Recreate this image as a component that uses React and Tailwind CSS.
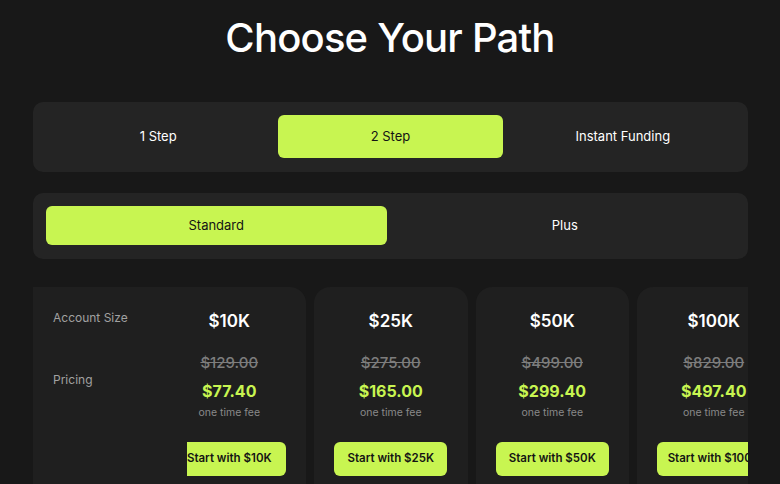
import { useState } from 'react';

const plans = [
  { size: '$10K', was: '$129.00', now: '$77.40' },
  { size: '$25K', was: '$275.00', now: '$165.00' },
  { size: '$50K', was: '$499.00', now: '$299.40' },
  { size: '$100K', was: '$829.00', now: '$497.40' },
];

function Segmented({ options, value, onChange, cols, tall }) {
  return (
    <div className={`grid ${cols} gap-2 rounded-[10px] bg-[#242424] px-[13px] pt-[13px] pb-[14px]`}>
      {options.map((o) => (
        <button
          key={o}
          onClick={() => onChange(o)}
          className={`${tall ? 'h-[43px]' : 'h-[39px]'} rounded-[6px] text-[13px] ${
            value === o ? 'bg-[#c8f551] text-[#141414]' : 'text-white'
          }`}
        >
          {o}
        </button>
      ))}
    </div>
  );
}

function PlanCard({ plan }) {
  return (
    <div className="flex w-[153.5px] shrink-0 flex-col items-center rounded-t-[16px] bg-[#1f1f1f] pt-[22px] pb-6">
      <p className="h-6 text-[17px] font-semibold leading-6 text-white">{plan.size}</p>
      <p className="mt-[20px] h-5 text-[15px] font-medium leading-5 text-[#7d7d7d] line-through">{plan.was}</p>
      <p className="mt-[6px] h-6 text-[16px] font-bold leading-6 text-[#c8f551]">{plan.now}</p>
      <p className="mt-[2px] h-4 text-[10.5px] leading-4 text-[#8a8a8a]">one time fee</p>
      <button className="mt-[21px] h-[34px] w-[113px] shrink-0 whitespace-nowrap rounded-[6px] bg-[#c8f551] text-[11.5px] font-semibold text-[#141414]">
        Start with {plan.size}
      </button>
    </div>
  );
}

export default function App() {
  const [step, setStep] = useState('2 Step');
  const [tier, setTier] = useState('Standard');

  return (
    <div className="min-h-[484px] bg-[#181818] font-['Inter',sans-serif]">
      <h1 className="pt-[14px] text-center text-[40px] font-medium leading-[48px] tracking-[-0.02em] text-white">
        Choose Your Path
      </h1>

      <div className="mx-[33px] mt-[40px] w-[715px]">
        <Segmented
          options={['1 Step', '2 Step', 'Instant Funding']}
          value={step}
          onChange={setStep}
          cols="grid-cols-3"
          tall
        />
        <div className="mt-[21px]">
          <Segmented options={['Standard', 'Plus']} value={tier} onChange={setTier} cols="grid-cols-2" />
        </div>

        <div className="mt-[28px] flex overflow-hidden">
          <div className="relative z-10 w-[154px] shrink-0 bg-[#1f1f1f] pl-5 pt-[21px]">
            <p className="h-5 text-[12px] leading-5 text-[#a1a1a1]">Account Size</p>
            <p className="mt-[42px] h-5 text-[12px] leading-5 text-[#a1a1a1]">Pricing</p>
          </div>
          <div className="-ml-[34.5px] flex gap-2">
            {plans.map((p) => (
              <PlanCard key={p.size} plan={p} />
            ))}
          </div>
        </div>
      </div>
    </div>
  );
}
